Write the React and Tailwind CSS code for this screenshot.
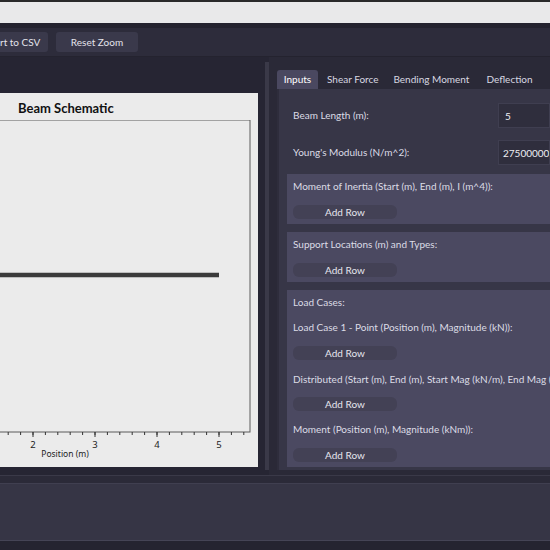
import React from "react";

const font = { fontFamily: 'Lato, "Noto Sans", sans-serif' };
const plotFont = { fontFamily: '"Noto Sans", "Open Sans", sans-serif' };

function AddRow() {
  return (
    <div className="flex">
      <button className="w-[104px] h-[14px] rounded-md bg-[#434155] text-[#e6e6ee] text-[10px] leading-[14px] text-center">
        Add Row
      </button>
    </div>
  );
}

function BeamPlot() {
  // 1 m = 62px, x=5 at 219
  const xOf = (v) => 219 - (5 - v) * 62;
  const minor = [];
  for (let i = 0; i <= 27; i++) {
    const v = 0 + i * 0.2;
    const x = xOf(v);
    if (x >= 0 && x <= 250) minor.push(x);
  }
  return (
    <svg width="258" height="340" viewBox="0 0 258 340" className="block">
      <rect x="-2" y="0" width="252" height="312" fill="#ebebeb" stroke="#5a5a5a" strokeWidth="1" />
      <line x1="0" y1="155" x2="219" y2="155" stroke="#3b3b3b" strokeWidth="4.5" />
      {minor.map((x, i) => (
        <line key={i} x1={x} y1="312" x2={x} y2="315" stroke="#333" strokeWidth="1" />
      ))}
      {[2, 3, 4, 5].map((v) => (
        <g key={v}>
          <line x1={xOf(v)} y1="312" x2={xOf(v)} y2="317" stroke="#333" strokeWidth="1" />
          <text x={xOf(v)} y="328" fontSize="9.5" textAnchor="middle" fill="#222" style={plotFont}>
            {v}
          </text>
        </g>
      ))}
      <text x="65" y="337" fontSize="8.5" textAnchor="middle" fill="#222" style={plotFont}>
        Position (m)
      </text>
    </svg>
  );
}

export default function App() {
  return (
    <div className="w-[550px] h-[550px] overflow-hidden bg-[#262533] flex flex-col" style={font}>
      {/* window top */}
      <div className="h-[23px] bg-[#e9e9ea] border-t-[2px] border-[#2a2a2a]"></div>
      <div className="h-[5px] bg-[#24232f]"></div>

      {/* toolbar */}
      <div className="h-[29px] bg-[#2d2c3b] flex items-center gap-[8px] border-b border-[#24232f]">
        <button className="w-[48px] h-[20px] rounded-r-[3px] bg-[#3a394b] text-[#e4e4ec] text-[10px] text-right pr-[11px] whitespace-nowrap overflow-hidden">
          rt to CSV
        </button>
        <button className="w-[82px] h-[20px] rounded-[3px] bg-[#3a394b] text-[#e4e4ec] text-[10px]">
          Reset Zoom
        </button>
      </div>

      {/* main */}
      <div className="h-[418px] flex">
        <div className="w-[265px] shrink-0 pt-[36px] bg-[#262533]">
          <div className="w-[258px] h-[374px] bg-[#ebebeb] flex flex-col">
            <div className="h-[27px] pt-[5px] pl-[18px] text-[13px] font-bold text-[#111] leading-[20px]">
              Beam Schematic
            </div>
            <BeamPlot />
          </div>
        </div>
        <div className="w-[4px] shrink-0 my-[5px] bg-[#3a3948]"></div>
        <div className="flex-1 min-w-0 overflow-hidden pl-[8px] pt-[13px] pb-[5px] flex flex-col bg-[#2a2937]">
          {/* tabs */}
          <div className="h-[19px] flex items-end text-[10px] text-[#d8d8e2] whitespace-nowrap">
            <div className="h-[19px] w-[41px] rounded-t-[3px] bg-[#4a4860] text-white leading-[19px] text-center">Inputs</div>
            <div className="pl-[9px] pr-[15px] leading-[19px]">Shear Force</div>
            <div className="pr-[17px] leading-[19px]">Bending Moment</div>
            <div className="leading-[19px]">Deflection</div>
          </div>
          {/* content */}
          <div className="flex-1 bg-[#373647] border-l-[2px] border-[#2e2d3c] pl-[8px] pt-[13px] text-[10px] text-[#dcdce6] flex flex-col">
            <div className="flex items-center h-[26px]">
              <div className="w-[211px] shrink-0 pl-[6px]">Beam Length (m):</div>
              <div className="flex-1 h-[25px] bg-[#2f2e3d] border border-[#3f3e50] pl-[6px] leading-[24px] text-[#eeeef4]">5</div>
            </div>
            <div className="flex items-center h-[26px] mt-[11px]">
              <div className="w-[211px] shrink-0 pl-[6px]">Young's Modulus (N/m^2):</div>
              <div className="flex-1 h-[25px] bg-[#2f2e3d] border border-[#3f3e50] pl-[4px] leading-[24px] text-[#eeeef4] whitespace-nowrap overflow-hidden">
                2750000000
              </div>
            </div>

            <div className="mt-[9px] h-[50px] bg-[#4b4961] pl-[6px] pt-[4px] flex flex-col">
              <div className="h-[16px] leading-[16px] whitespace-nowrap">Moment of Inertia (Start (m), End (m), I (m^4)):</div>
              <div className="mt-[11px]"><AddRow /></div>
            </div>

            <div className="mt-[8px] h-[50px] bg-[#4b4961] pl-[6px] pt-[4px] flex flex-col">
              <div className="h-[16px] leading-[16px] whitespace-nowrap">Support Locations (m) and Types:</div>
              <div className="mt-[11px]"><AddRow /></div>
            </div>

            <div className="mt-[8px] h-[177px] bg-[#4b4961] pl-[6px] pt-[4px] flex flex-col">
              <div className="h-[16px] leading-[16px]">Load Cases:</div>
              <div className="mt-[9px] h-[16px] leading-[16px] whitespace-nowrap">Load Case 1 - Point (Position (m), Magnitude (kN)):</div>
              <div className="mt-[11px]"><AddRow /></div>
              <div className="mt-[11px] h-[16px] leading-[16px] whitespace-nowrap">Distributed (Start (m), End (m), Start Mag (kN/m), End Mag (kN/m)):</div>
              <div className="mt-[10px]"><AddRow /></div>
              <div className="mt-[10px] h-[16px] leading-[16px] whitespace-nowrap">Moment (Position (m), Magnitude (kNm)):</div>
              <div className="mt-[11px]"><AddRow /></div>
            </div>
          </div>
        </div>
      </div>

      {/* bottom */}
      <div className="h-[8px] bg-[#2b2a38] border-t border-[#3a3948]"></div>
      <div className="h-[57px] bg-[#363545] border-t border-[#403f50]"></div>
      <div className="flex-1 bg-[#252430] border-t border-[#454455]"></div>
    </div>
  );
}
